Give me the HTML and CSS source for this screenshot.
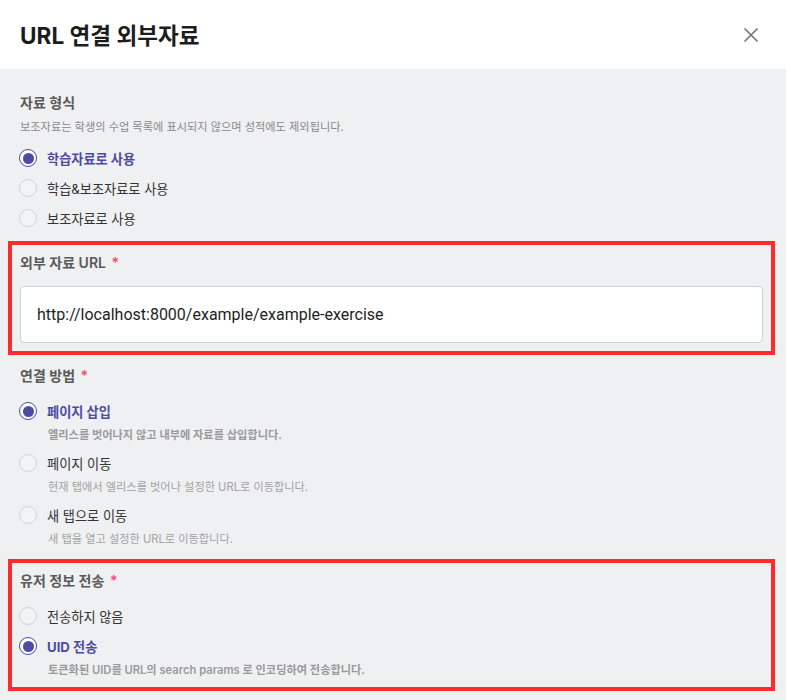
FILE: index.html
```html
<!DOCTYPE html>
<html lang="ko">
<head>
    <meta charset="UTF-8">
    <meta name="viewport" content="width=device-width, initial-scale=1.0">
    <title>URL 연결 외부자료</title>
    <link rel="stylesheet" href="styles.css">
</head>
<body>
    <div class="modal">
        <div class="modal-header">
            <h2>URL 연결 외부자료</h2>
            <button class="close" aria-label="닫기">
                <svg width="16" height="16" viewBox="0 0 16 16">
                    <path d="M1.5 1.5L14.5 14.5M14.5 1.5L1.5 14.5" stroke="#777" stroke-width="1.7" fill="none"/>
                </svg>
            </button>
        </div>

        <div class="modal-body">
            <div class="field">
                <div class="field-label">자료 형식</div>
                <div class="field-desc">보조자료는 학생의 수업 목록에 표시되지 않으며 성적에도 제외됩니다.</div>
                <div class="options">
                    <label class="option checked"><span class="radio"></span><span class="option-text">학습자료로 사용</span></label>
                    <label class="option"><span class="radio"></span><span class="option-text">학습&amp;보조자료로 사용</span></label>
                    <label class="option"><span class="radio"></span><span class="option-text">보조자료로 사용</span></label>
                </div>
            </div>

            <div class="field highlight">
                <div class="field-label">외부 자료 URL <span class="req">*</span></div>
                <input class="url-input" type="text" value="http://localhost:8000/example/example-exercise">
            </div>

            <div class="field">
                <div class="field-label">연결 방법 <span class="req">*</span></div>
                <div class="options spaced">
                    <div class="option-group">
                        <label class="option checked"><span class="radio"></span><span class="option-text">페이지 삽입</span></label>
                        <div class="option-desc">엘리스를 벗어나지 않고 내부에 자료를 삽입합니다.</div>
                    </div>
                    <div class="option-group">
                        <label class="option"><span class="radio"></span><span class="option-text">페이지 이동</span></label>
                        <div class="option-desc">현재 탭에서 엘리스를 벗어나 설정한 URL로 이동합니다.</div>
                    </div>
                    <div class="option-group">
                        <label class="option"><span class="radio"></span><span class="option-text">새 탭으로 이동</span></label>
                        <div class="option-desc">새 탭을 열고 설정한 URL로 이동합니다.</div>
                    </div>
                </div>
            </div>

            <div class="field highlight">
                <div class="field-label">유저 정보 전송 <span class="req">*</span></div>
                <div class="options">
                    <label class="option"><span class="radio"></span><span class="option-text">전송하지 않음</span></label>
                    <div class="option-group">
                        <label class="option checked"><span class="radio"></span><span class="option-text">UID 전송</span></label>
                        <div class="option-desc">토큰화된 UID를 URL의 search params 로 인코딩하여 전송합니다.</div>
                    </div>
                </div>
            </div>
        </div>
    </div>
</body>
</html>
```

FILE: styles.css
```css
body {
    margin: 0;
    font-family: Inter, "Noto Sans CJK KR", sans-serif;
    background: #eff0f2;
    color: #333;
}
.modal {
    width: 786px;
    min-height: 700px;
    background: #eff0f2;
}
.modal-header {
    height: 69px;
    background: #fff;
    display: flex;
    align-items: center;
    justify-content: space-between;
    padding: 0 20px;
}
.modal-header h2 {
    margin: 0;
    font-size: 22.6px;
    font-weight: 700;
    color: #1c1c1c;
}
.close {
    border: none;
    background: none;
    padding: 0;
    width: 24px;
    height: 24px;
    display: flex;
    align-items: center;
    justify-content: center;
    margin-right: 3px;
}
.modal-body {
    padding: 24px 23px 20px 20px;
    display: flex;
    flex-direction: column;
    gap: 23px;
}
.field {
    display: flex;
    flex-direction: column;
}
.highlight {
    outline: 4px solid #ff2a2a;
    outline-offset: 8px;
}
.field-label {
    font-size: 14px;
    line-height: 20px;
    font-weight: 600;
    color: #5a5a5a;
    margin-bottom: 13px;
}
.field-desc {
    font-size: 11.2px;
    line-height: 18px;
    color: #8a8a8a;
    margin-top: -8px;
    margin-bottom: 10px;
}
.req {
    color: #f5476f;
    margin-left: 2px;
}
.options {
    display: flex;
    flex-direction: column;
    gap: 6px;
}
.options.spaced {
    gap: 7px;
}
.option {
    display: flex;
    align-items: center;
    height: 24px;
    gap: 10px;
    font-size: 13.2px;
    color: #333;
}
.radio {
    width: 18px;
    height: 18px;
    margin-left: -1px;
    border-radius: 50%;
    border: 1px solid #d2d3d6;
    background: #f2f3f5;
    box-sizing: border-box;
    display: flex;
    align-items: center;
    justify-content: center;
}
.option.checked .radio {
    border: 1.5px solid #4c4ca3;
    background: #fff;
}
.option.checked .radio::after {
    content: "";
    width: 11px;
    height: 11px;
    border-radius: 50%;
    background: #4c4ca3;
}
.option.checked .option-text {
    color: #4c4ca3;
    font-weight: 700;
}
.option-desc {
    font-size: 11.2px;
    line-height: 18px;
    color: #a3a3a3;
    margin-top: 3px;
    padding-left: 28px;
}
.option-group:has(.checked) .option-desc {
    color: #9a9a9a;
    font-weight: 600;
}
.url-input {
    height: 57px;
    box-sizing: border-box;
    border: 1px solid #cfd0d3;
    border-radius: 4px;
    background: #fff;
    padding: 0 16px;
    font-family: Roboto, "Noto Sans CJK KR", sans-serif;
    font-size: 16px;
    color: #1e1e1e;
}
```
